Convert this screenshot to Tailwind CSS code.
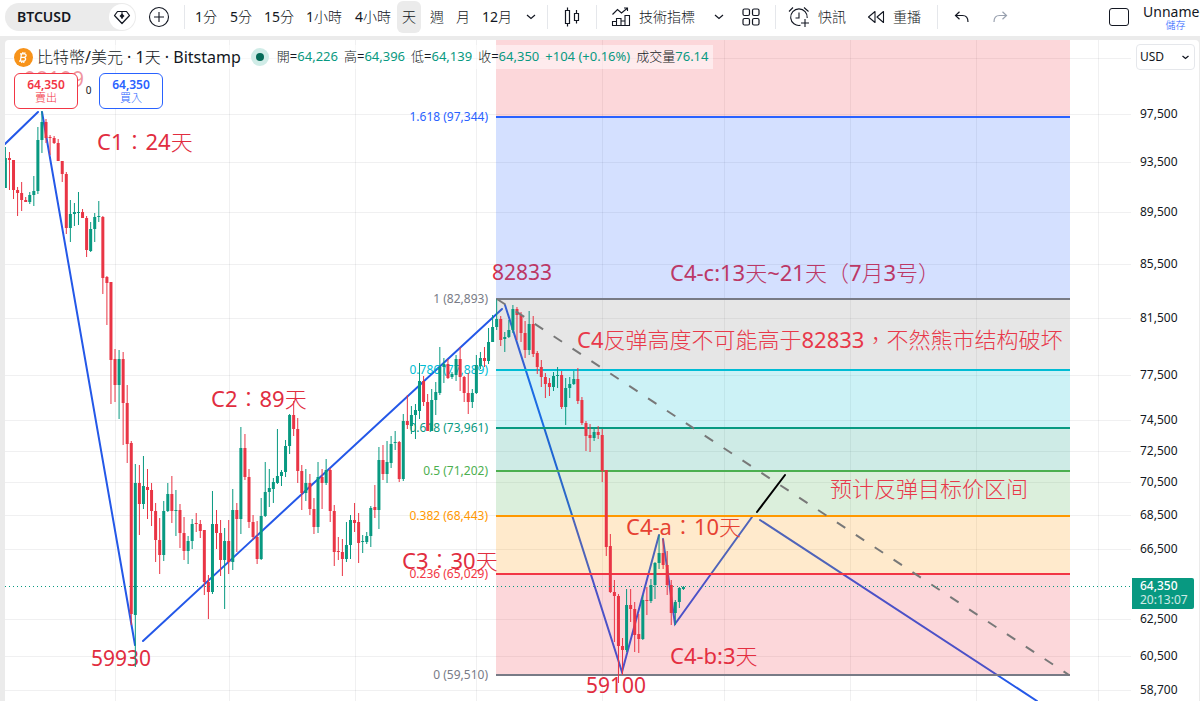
<!DOCTYPE html>
<html lang="zh-Hant">
<head>
    <meta charset="UTF-8">
    <meta name="viewport" content="width=device-width, initial-scale=1.0">
    <title>BTCUSD</title>
    <script src="https://cdn.jsdelivr.net/npm/@tailwindcss/browser@4"></script>
</head>
<body class="h-screen flex flex-col overflow-hidden bg-[#ebebeb] text-[#131722] font-['Noto_Sans','Noto_Sans_CJK_TC_Light','Noto_Sans_CJK_TC',sans-serif]">

    <!-- Toolbar -->
    <header class="h-9 shrink-0 flex items-center bg-white text-sm whitespace-nowrap overflow-hidden pb-[2px]">
        <button class="ml-[5px] w-[131px] h-7 shrink-0 flex items-center justify-between rounded-full bg-[#ebebeb] pl-3 pr-px font-semibold">
            BTCUSD
            <span class="w-[26px] h-[26px] rounded-full bg-white flex items-center justify-center">
                <svg class="w-[18px] h-[18px]" viewBox="0 0 18 18" fill="none" stroke="currentColor" stroke-width="1.2" stroke-linejoin="round">
                    <path d="M4.500 3.500h9l3 4-7.500 8-7.500-8z"/>
                    <path d="M9 4v7" stroke-width="1"/>
                    <path d="M9 5.500l2.500 2.500-2.500 2.500-2.500-2.500z" fill="currentColor" stroke="none"/>
                </svg>
            </span>
        </button>
        <button class="ml-3 w-[22px] shrink-0" aria-label="Compare">
            <svg class="w-[22px] h-[22px]" viewBox="0 0 22 22" fill="none" stroke="currentColor" stroke-width="1.1">
                <circle cx="11" cy="11" r="9.500"/>
                <path d="M11 6v10M6 11h10"/>
            </svg>
        </button>
        <span class="ml-[14px] w-px h-6 bg-gray-200 shrink-0"></span>
        <nav class="flex items-center shrink-0 ml-1">
            <button class="w-[34px]">1分</button>
            <button class="w-[36px]">5分</button>
            <button class="w-[40px]">15分</button>
            <button class="w-[50px]">1小時</button>
            <button class="w-[48px]">4小時</button>
            <button class="w-6 h-8 rounded-md bg-[#ebebeb]">天</button>
            <button class="w-8">週</button>
            <button class="w-5">月</button>
            <button class="w-12">12月</button>
            <button class="w-5 flex justify-center" aria-label="More intervals">
                <svg class="w-[10px] h-[6px]" viewBox="0 0 10 6" fill="none" stroke="currentColor" stroke-width="1.2"><path d="M1 1l4 3.500 4-3.500"/></svg>
            </button>
        </nav>
        <span class="ml-[6px] w-px h-6 bg-gray-200 shrink-0"></span>
        <button class="w-12 flex justify-center shrink-0" aria-label="Candles">
            <svg class="w-4 h-[22px]" viewBox="0 0 16 22" fill="none" stroke="currentColor" stroke-width="1.2">
                <path d="M1.500 4.500h4v13h-4zM3.500 1.500v3M3.500 17.500v3M10.500 7.500h4v7h-4zM12.500 4v3.500M12.500 14.500v3"/>
            </svg>
        </button>
        <span class="w-px h-6 bg-gray-200 shrink-0"></span>
        <button class="ml-[14px] flex items-center gap-2 shrink-0">
            <svg class="w-5 h-5" viewBox="0 0 20 20" fill="none" stroke="currentColor" stroke-width="1.1">
                <path d="M1.500 7.500l5-5 4 3.500 5.500-4.500M13 1h3.500v3"/>
                <path d="M1.500 18.500v-4h4v4zM5.500 18.500v-7h4.500v7zM10 18.500v-4.500h4v4.500zM14 18.500V8.500h4.500v10z"/>
            </svg>
            技術指標
        </button>
        <button class="ml-[14px] w-5 flex justify-center shrink-0" aria-label="Favourites">
            <svg class="w-[10px] h-[6px]" viewBox="0 0 10 6" fill="none" stroke="currentColor" stroke-width="1.2"><path d="M1 1l4 3.500 4-3.500"/></svg>
        </button>
        <button class="ml-3 w-5 flex justify-center shrink-0" aria-label="Templates">
            <svg class="w-[18px] h-[18px]" viewBox="0 0 18 18" fill="none" stroke="currentColor" stroke-width="1.2">
                <rect x="1" y="1" width="6.500" height="6.500" rx="1.500"/><rect x="10.500" y="1" width="6.500" height="6.500" rx="1.500"/>
                <rect x="1" y="10.500" width="6.500" height="6.500" rx="1.500"/><rect x="10.500" y="10.500" width="6.500" height="6.500" rx="1.500"/>
            </svg>
        </button>
        <span class="ml-[14px] w-px h-6 bg-gray-200 shrink-0"></span>
        <button class="ml-3 flex items-center gap-2 shrink-0">
            <svg class="w-[22px] h-[22px]" viewBox="0 0 22 22" fill="none" stroke="currentColor" stroke-width="1.1">
                <path d="M12.500 19.300A8.300 8.300 0 1 1 19.200 12"/>
                <path d="M11 6.500V12H7.500M1 5.500l4-4M16 1.500l4.500 4M17 13v8M13 17h8"/>
            </svg>
            快訊
        </button>
        <button class="ml-[21px] flex items-center gap-2 shrink-0">
            <svg class="w-[18px] h-[14px]" viewBox="0 0 18 14" fill="none" stroke="currentColor" stroke-width="1.1" stroke-linejoin="round">
                <path d="M8 1.500v11L1.500 7zM16.500 1.500v11L10 7z"/>
            </svg>
            重播
        </button>
        <span class="ml-4 w-px h-6 bg-gray-200 shrink-0"></span>
        <button class="ml-4 shrink-0" aria-label="Undo">
            <svg class="w-4 h-3" viewBox="0 0 16 12" fill="none" stroke="currentColor" stroke-width="1.2"><path d="M5.500 .800L1.500 4.500l4 3.700M1.500 4.500h7c3.500 0 5.500 2 5.500 6.500"/></svg>
        </button>
        <button class="ml-[22px] shrink-0 text-gray-400" aria-label="Redo">
            <svg class="w-4 h-3" viewBox="0 0 16 12" fill="none" stroke="currentColor" stroke-width="1.2"><path d="M10.500 .800l4 3.700-4 3.700M14.500 4.500h-7C4 4.500 2 6.500 2 11"/></svg>
        </button>
        <div class="ml-auto shrink-0 w-[91px] flex items-center gap-[14px]">
            <button class="w-5 h-[18px] shrink-0 rounded-[3px] border border-[#131722]" aria-label="Layout"></button>
            <button class="flex flex-col items-center shrink-0 leading-none">
                <span class="text-sm leading-4">Unnamed</span>
                <span class="text-[10px] leading-[10px] text-[#2962ff]">儲存</span>
            </button>
        </div>
    </header>

    <main class="flex-1 min-h-0 flex mt-1 ml-[5px] mr-px bg-white rounded-t relative overflow-hidden">
        <!-- Price chart -->
        <section class="flex-1 min-w-0">
            <svg class="w-full h-full" aria-label="BTCUSD 1D">
                <g transform="translate(-5,-40)">
                    <g id="grid" stroke="#2a2e39" stroke-opacity="0.07"></g>
                    <g fill="none" stroke="#2458e8" stroke-width="2" stroke-linecap="round">
                        <path d="M5 144L38 112M42 112L135 645M143 641L502 309M505 305L622 672L659 535M663 539L675 624L752 517M760 520L1037 701"/>
                    </g>
                    <g fill="#e12d3f" font-size="22">
                        <g font-size="21">
                            <text x="24" y="87" fill-opacity="0.5">98199</text>
                            <text x="91" y="666">59930</text>
                            <text x="492" y="280">82833</text>
                            <text x="586" y="693">59100</text>
                        </g>
                        <text x="97" y="150">C1：24天</text>
                        <text x="211" y="407">C2：89天</text>
                        <text x="402" y="569">C3：30天</text>
                        <text x="626" y="535">C4-a：10天</text>
                        <text x="670" y="664">C4-b:3天</text>
                        <text x="670" y="281">C4-c:13天~21天（7月3号）</text>
                    </g>
                    <g id="levels"></g>
                    <g id="candles"></g>
                    <g fill="#e8394a" font-size="22">
                        <text x="577" y="348">C4反弹高度不可能高于82833，不然熊市结构破坏</text>
                        <text x="830" y="497">预计反弹目标价区间</text>
                    </g>
                    <path d="M497 299L1069 675" stroke="#787878" stroke-width="2" stroke-dasharray="10 12.600"/>
                    <path d="M757 512L785 475" stroke="#000" stroke-width="2" stroke-linecap="round"/>
                    <path d="M5 586.500H1132" stroke="#089981" stroke-dasharray="1 3"/>
                </g>
            </svg>
        </section>

        <!-- Price scale -->
        <aside class="w-[67px] shrink-0 relative">
            <svg class="w-full h-full text-xs" fill="currentColor">
                <g id="scale" transform="translate(0,-40)"></g>
            </svg>
            <select aria-label="Currency" class="absolute top-1 left-1 w-[59px] h-[26px] rounded border border-gray-200 bg-white pl-[3px] text-xs appearance-none">
                <option>USD</option>
            </select>
            <svg class="absolute top-[15px] right-[10px] w-[7px] h-[5px] pointer-events-none" viewBox="0 0 7 5" fill="none" stroke="currentColor" stroke-width="1.300"><path d="M.5 1l3 2.500 3-2.500"/></svg>
            <div class="absolute top-[538px] left-0 w-[62px] h-[31px] rounded-r-xs bg-[#089981] pl-2 py-px text-xs leading-[14px] text-white">
                <div class="font-medium">64,350</div>
                <div class="text-white/80">20:13:07</div>
            </div>
        </aside>

        <!-- Legend and order buttons -->
        <div class="absolute top-[5px] left-2 flex flex-col gap-1">
            <div class="flex items-center h-6 bg-white/50 whitespace-nowrap pr-1">
                <svg class="w-[19px] h-[19px] ml-px" viewBox="0 0 19 19">
                    <circle cx="9.500" cy="9.500" r="9.500" fill="#f7931a"/>
                    <path d="M7.500 5.500l-1.200 8M6 5.900h4.500c2.400 .300 2 3.100-.300 3.400H7M10 9.400c2.500 .300 2 3.600-.800 3.800H5M9 4l-.300 2M11 4.300l-.300 2M8 13l-.300 2M10 13l-.300 2" fill="none" stroke="#fff" stroke-width="1.300"/>
                </svg>
                <h1 class="ml-1 text-base leading-6">比特幣/美元 · 1天 · Bitstamp</h1>
                <span class="ml-[10px] w-[18px] h-[18px] rounded-full bg-[#d0ece7] flex items-center justify-center"><span class="w-2 h-2 rounded-full bg-[#066b58]"></span></span>
                <div class="ml-2 flex gap-[6px] text-[13px]">
                    <span>開=<span class="text-[#089981]">64,226</span></span>
                    <span>高=<span class="text-[#089981]">64,396</span></span>
                    <span>低=<span class="text-[#089981]">64,139</span></span>
                    <span>收=<span class="text-[#089981]">64,350</span></span>
                    <span class="text-[#089981]">+104 (+0.16%)</span>
                    <span>成交量<span class="text-[#089981]">76.14</span></span>
                </div>
            </div>
            <div class="flex items-center pl-px text-xs">
                <button class="w-16 h-9 rounded-md border border-[#f23645] bg-white text-[#f23645] flex flex-col items-center justify-center">
                    <span class="text-xs leading-[14px] font-semibold">64,350</span>
                    <span class="text-[11px] leading-3">賣出</span>
                </button>
                <span class="w-[21px] text-center text-[10px]">0</span>
                <button class="w-16 h-9 rounded-md border border-[#2962ff] bg-white text-[#2962ff] flex flex-col items-center justify-center">
                    <span class="text-xs leading-[14px] font-semibold">64,350</span>
                    <span class="text-[11px] leading-3">買入</span>
                </button>
            </div>
        </div>
    </main>

    <script>
        const NS = "http://www.w3.org/2000/svg";

        function add(parent, tag, attrs, text) {
            const el = document.createElementNS(NS, tag);
            for (const key in attrs) el.setAttribute(key, attrs[key]);
            if (text) el.textContent = text;
            parent.appendChild(el);
        }

        // Price scale labels and horizontal grid
        const prices = [
            ["97,500", 114], ["93,500", 162], ["89,500", 212], ["85,500", 264], ["81,500", 318],
            ["77,500", 375], ["74,500", 420], ["72,500", 451], ["70,500", 482], ["68,500", 515],
            ["66,500", 549], ["62,500", 619], ["60,500", 656], ["58,700", 690],
        ];
        const grid = document.getElementById("grid");
        const scale = document.getElementById("scale");
        [["", 58], ...prices].forEach(([label, y]) => {
            add(grid, "path", { d: `M5 ${y + 0.5}H1131` });
            if (label) add(scale, "text", { x: 8, y: y + 4 }, label);
        });
        [115, 229, 355, 476, 602, 724, 850, 976, 1098].forEach(x => add(grid, "path", { d: `M${x + 0.5} 40V701` }));

        // Fibonacci levels: y, line colour, label, fill of the band above
        const levels = [
            [117, "#2962ff", "1.618 (97,344)", "#f23645"],
            [299, "#787b86", "1 (82,893)", "#2962ff"],
            [370, "#00bcd4", "0.786 (77,889)", "#808080"],
            [428, "#089981", "0.618 (73,961)", "#00bcd4"],
            [471, "#4caf50", "0.5 (71,202)", "#089981"],
            [516, "#ff9800", "0.382 (68,443)", "#4caf50"],
            [574, "#f23645", "0.236 (65,029)", "#ff9800"],
            [675, "#787b86", "0 (59,510)", "#f23645"],
        ];
        const levelLayer = document.getElementById("levels");
        let bandTop = 40;
        levels.forEach(([y, color, label, fill]) => {
            add(levelLayer, "rect", { x: 496, y: bandTop, width: 574, height: y - bandTop, fill: fill, "fill-opacity": 0.2 });
            bandTop = y;
        });
        levels.forEach(([y, color, label]) => {
            add(levelLayer, "path", { d: `M496 ${y}H1070`, stroke: color, "stroke-width": 2 });
            add(levelLayer, "text", { x: 488, y: y + 4, fill: color, "font-size": 12, "text-anchor": "end" }, label);
        });

        // Daily candles: direction, then y of high, body top, body bottom, low
        const candles = `
            g147,158,188,188 r152,158,160,190 r160,160,190,199 r187,190,193,216 r182,193,200,211 r197,200,202,202
            g192,195,202,204 g176,191,195,206 g127,140,191,194 g111,122,140,153 r119,122,138,143 r135,137,138,155
            r136,138,143,144 r139,143,161,161 r161,161,174,182 r172,174,228,234 g200,214,228,242 g203,212,214,226
            g192,212,213,225 r209,212,218,218 r216,218,250,257 g222,229,251,252 g213,217,229,242 g201,216,217,222
            r216,217,278,294 r276,277,283,325 r282,282,360,404 r349,359,385,402 g350,359,385,419 r352,359,403,445
            r385,403,444,463 r441,443,614,625 g464,483,615,667 r465,483,504,535 g456,486,504,509 r469,487,490,519
            r483,490,511,526 r503,511,540,562 r518,540,555,574 g501,511,555,561 g483,494,511,512 r476,494,511,523
            g490,510,511,536 r504,510,533,548 r517,533,551,560 g536,541,551,564 g519,524,541,549 r513,523,524,532
            r520,524,531,538 r530,530,582,595 r575,582,592,619 g491,524,592,594 r510,524,533,549 r520,533,560,576
            g528,541,560,609 r520,541,562,574 g489,510,562,570 r503,510,519,552 g427,448,519,534 r434,448,477,480
            r469,477,522,528 r515,522,537,540 r521,537,559,564 g498,516,559,560 g462,492,516,517 g469,488,492,507
            g478,482,489,503 g429,476,483,484 g470,472,476,486 g440,446,472,477 g414,415,446,454 r401,415,429,436
            r418,429,471,483 r465,471,493,510 g469,483,493,501 r474,483,509,515 r498,509,527,534 g462,477,527,533
            r469,477,483,509 g459,470,483,485 r468,470,511,522 r505,511,552,566 r537,551,552,560 r539,552,559,576
            g522,545,559,562 g515,520,545,559 r503,520,523,532 r513,522,543,563 g535,541,542,553 g532,536,542,544
            g506,508,536,547 r485,507,510,518 g447,460,510,529 r445,460,474,480 g441,462,474,483 g436,444,463,468
            g431,442,443,450 r441,442,479,482 g414,421,479,481 r395,421,425,429 g406,415,426,434 g404,410,415,439
            g363,381,411,419 r376,381,402,406 r394,402,431,431 g389,400,431,431 g382,392,400,415 g347,367,393,395
            g358,364,367,383 r359,364,378,379 g372,374,377,379 g355,359,375,381 r347,359,377,391 r376,377,393,402
            r373,393,402,414 g389,393,402,408 g355,365,393,394 g352,358,366,369 r347,358,361,367 g328,342,361,364
            g315,327,342,342 g299,319,327,330 r316,319,340,346 g332,337,339,352 g320,330,337,338 g305,309,330,333
            r307,309,315,340 r312,315,333,342 r321,333,350,358 g311,324,350,355 r316,324,354,357 r351,353,367,374
            r360,367,377,387 r373,377,384,398 r378,383,387,396 g372,376,387,391 g367,375,376,388 r371,375,407,409
            g378,388,407,425 g377,384,388,398 g371,379,384,385 r368,379,401,404 r397,400,423,425 r421,423,436,451
            r424,435,438,452 g429,432,438,441 r426,432,435,439 r429,435,471,482 r470,470,547,556 r534,546,592,593
            r580,592,596,642 r594,596,646,683 r638,646,650,675 g589,605,650,652 r589,605,609,622 r602,609,635,652
            r614,634,639,653 g595,600,639,640 r587,600,601,615 g579,585,601,603 g562,563,585,599 g535,553,563,569
            r539,553,565,569 r551,565,585,595 r580,585,613,625 g600,602,613,625 g587,588,602,608 g586,587,589,590
        `.trim().split(/\s+/);
        const candleLayer = document.getElementById("candles");
        candles.forEach((candle, i) => {
            const [high, bodyTop, bodyBottom, low] = candle.slice(1).split(",").map(Number);
            const x = 5.4 + 4.06 * i;
            const color = candle[0] === "g" ? "#089981" : "#e93545";
            add(candleLayer, "rect", { x: x - 0.5, y: high, width: 1, height: low - high, fill: color });
            add(candleLayer, "rect", { x: x - 1.5, y: bodyTop, width: 3, height: Math.max(bodyBottom - bodyTop, 1), fill: color });
        });
    </script>
</body>
</html>
